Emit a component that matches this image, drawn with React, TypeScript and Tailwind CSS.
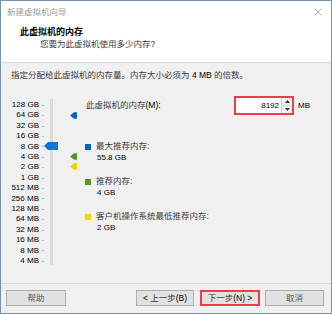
import React from "react";

const labels = [
  "128 GB", "64 GB", "32 GB", "16 GB", "8 GB", "4 GB", "2 GB", "1 GB",
  "512 MB", "256 MB", "128 MB", "64 MB", "32 MB", "16 MB", "8 MB", "4 MB",
];

function Marker({ color, top }: { color: string; top: number }) {
  return (
    <svg
      className="absolute left-[69px]"
      style={{ top }}
      width="7"
      height="7"
      viewBox="0 0 7 7"
    >
      <polygon points="0,3.5 4,0.3 7,0.3 7,6.7 4,6.7" fill={color} />
    </svg>
  );
}

function Legend({ color, label, value }: { color: string; label: string; value: string }) {
  return (
    <div className="flex flex-col">
      <div className="flex items-center h-[11px]">
        <div className="w-[6px] h-[6px]" style={{ background: color }} />
        <span className="ml-[5px] text-[#3a3a3a] leading-[11px]">{label}</span>
      </div>
      <div className="h-[11px] leading-[11px] pl-[12px] text-[8px] text-black">{value}</div>
    </div>
  );
}

export default function App() {
  return (
    <div className="w-[332px] h-[314px] border border-[#7592b0] bg-[#f0f0f0] flex flex-col font-['Liberation_Sans','Noto_Sans_CJK_SC',sans-serif] text-[8.5px] overflow-hidden">
      {/* top white area */}
      <div className="h-[62px] bg-white border-b border-[#dadada] flex flex-col shrink-0">
        <div className="h-[22px] flex items-center justify-between pl-[6px] pr-[9px]">
          <span className="text-[#9a9a9a] text-[8.5px]">新建虚拟机向导</span>
          <svg width="8" height="8" viewBox="0 0 8 8">
            <path d="M0.5 0.5 L7.5 7.5 M7.5 0.5 L0.5 7.5" stroke="#a0a0a0" strokeWidth="0.8" />
          </svg>
        </div>
        <div className="mt-[4px] h-[11px] leading-[11px] pl-[19px] text-[9px] font-bold text-black">
          此虚拟机的内存
        </div>
        <div className="mt-[1px] h-[11px] leading-[11px] pl-[39px] text-[#3a3a3a]">
          您要为此虚拟机使用多少内存?
        </div>
      </div>

      {/* body */}
      <div className="flex-1 flex flex-col">
        <div className="pt-[6px] pl-[10px] h-[18px] leading-[12px] text-[#3a3a3a]">
          指定分配给此虚拟机的内存量。内存大小必须为 <span className="text-black">4 MB</span> 的倍数。
        </div>

        <div className="mt-[15px] flex">
          {/* slider */}
          <div className="relative mt-[4px] flex">
            <div className="w-[38px] flex flex-col text-right text-[8px] text-black">
              {labels.map((l) => (
                <div key={l} className="h-[10.42px] leading-[10.42px] whitespace-nowrap">
                  {l}
                </div>
              ))}
            </div>
            <div className="ml-[3px] flex flex-col">
              {labels.map((l) => (
                <div key={l} className="h-[10.42px] flex items-center">
                  <div className="w-[2px] h-px bg-[#b5b5b5]" />
                </div>
              ))}
            </div>
            <div className="ml-[6px] -mt-[1px] w-[3px] h-[166px] bg-[#e4e4e4] border-x border-[#d6d6d6]" />
            <svg
              className="absolute left-[43px] top-[42px]"
              width="14"
              height="8"
              viewBox="0 0 14 8"
            >
              <polygon points="0,4 4,0 14,0 14,8 4,8" fill="#0a78d4" />
            </svg>
            <Marker color="#0a63b5" top={12} />
            <Marker color="#4c9a24" top={53} />
            <Marker color="#f2d100" top={63} />
            <div className="w-[6px]" />
          </div>

          {/* right column */}
          <div className="ml-[26px] flex flex-col">
            <div className="flex items-center h-[19px]">
              <div className="w-[149px] pl-[1px] text-[#3a3a3a]">
                此虚拟机的内存<span className="text-black">(M):</span>
              </div>
              <div className="w-[60px] h-[19px] border-2 border-[#e8404b] bg-white flex items-stretch">
                <div className="flex-1 text-right pr-[2px] text-[8px] text-black leading-[15px]">
                  8192
                </div>
                <div className="w-[11px] flex flex-col border-l border-[#d0d0d0]">
                  <div className="flex-1 flex items-center justify-center border-b border-[#d0d0d0] bg-[#f3f3f3]">
                    <svg width="5" height="3" viewBox="0 0 5 3">
                      <polygon points="0,3 2.5,0 5,3" fill="#333" />
                    </svg>
                  </div>
                  <div className="flex-1 flex items-center justify-center bg-[#f3f3f3]">
                    <svg width="5" height="3" viewBox="0 0 5 3">
                      <polygon points="0,0 2.5,3 5,0" fill="#333" />
                    </svg>
                  </div>
                </div>
              </div>
              <span className="ml-[4px] text-[8px] text-black">MB</span>
            </div>

            <div className="mt-[26px] flex flex-col gap-[13px]">
              <Legend color="#0a63b5" label="最大推荐内存:" value="55.8 GB" />
              <Legend color="#4c9a24" label="推荐内存:" value="4 GB" />
              <Legend color="#f7d300" label="客户机操作系统最低推荐内存:" value="2 GB" />
            </div>
          </div>
        </div>
      </div>

      {/* footer */}
      <div className="h-[30px] shrink-0 border-t border-[#d5d5d5] pt-[6px] pl-[5px] pr-[7px] flex">
        <button className="w-[60px] h-[16px] bg-[#e1e1e1] border border-[#adadad] text-[#555] text-[8.5px] leading-[14px]">
          帮助
        </button>
        <div className="flex-1" />
        <button className="w-[58px] h-[16px] bg-[#e1e1e1] border border-[#adadad] text-[#333] text-[8.5px] leading-[14px]">
          <span className="text-black">&lt; </span>上一步<span className="text-black">(B)</span>
        </button>
        <button className="ml-[6px] w-[60px] h-[16px] bg-[#e1e1e1] border-2 border-[#e8404b] text-[#333] text-[8.5px] leading-[12px]">
          下一步<span className="text-black">(N) &gt;</span>
        </button>
        <button className="ml-[5px] w-[59px] h-[16px] bg-[#e1e1e1] border border-[#adadad] text-[#555] text-[8.5px] leading-[14px]">
          取消
        </button>
      </div>
    </div>
  );
}
